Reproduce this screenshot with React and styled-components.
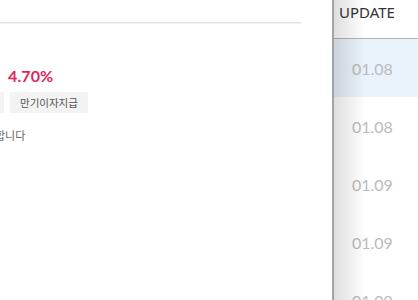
import React from "react";
import styled, { createGlobalStyle } from "styled-components";

const Global = createGlobalStyle`
  html, body { margin: 0; padding: 0; background: #fff; overflow: hidden; }
  body { font-family: "Noto Sans", "Noto Sans CJK KR", sans-serif; }
`;

const Page = styled.div`
  display: grid;
  grid-template-columns: 332px 90px;
  width: 418px;
  height: 300px;
  overflow: hidden;
`;

const LeftPanel = styled.div`
  overflow: hidden;
  padding-top: 22px;
`;

const Divider = styled.div`
  width: 301px;
  height: 1px;
  background: #e2e2e2;
  border-bottom: 1px solid #f0f0f0;
`;

const Card = styled.div`
  margin-left: -106px;
  padding-top: 42px;
  display: flex;
  flex-direction: column;
`;

const RateRow = styled.div`
  display: flex;
  align-items: center;
  gap: 12px;
  height: 18px;
`;

const RateLabel = styled.span`
  width: 102px;
  font-family: "Lato", "Noto Sans CJK KR", sans-serif;
  font-size: 13px;
  color: #666;
  text-align: right;
`;

const Rate = styled.span`
  font-family: "Lato", sans-serif;
  font-weight: 700;
  font-size: 16px;
  color: #e0245e;
  letter-spacing: 0.1px;
`;

const TagRow = styled.div`
  display: flex;
  gap: 6px;
  margin: 8px 0 0 6px;
`;

const Tag = styled.span`
  height: 21px;
  padding: 0 10px;
  display: inline-flex;
  align-items: center;
  background: #f3f3f3;
  color: #555;
  font-family: "Noto Sans CJK KR", sans-serif;
  font-size: 10.5px;
  white-space: nowrap;
`;

const Note = styled.p`
  margin: 14px 0 0 15px;
  font-family: "Noto Sans CJK KR", sans-serif;
  font-size: 11px;
  color: #666;
  white-space: nowrap;
`;

const Column = styled.div`
  position: relative;
  border-left: 2px solid #a3a3a3;
  background: #fff;
  &::before {
    content: "";
    position: absolute;
    top: 0;
    bottom: 0;
    left: 0;
    width: 32px;
    background: linear-gradient(to right, rgba(0, 0, 0, 0.13), rgba(0, 0, 0, 0));
    pointer-events: none;
    z-index: 1;
  }
`;

const HeadCell = styled.div`
  height: 39px;
  border-bottom: 1px solid #b5b5b5;
  padding-left: 5px;
  display: flex;
  align-items: flex-start;
  padding-top: 1px;
  box-sizing: border-box;
  font-family: "Noto Sans", sans-serif;
  font-size: 15px;
  color: #333;
  line-height: 22px;
`;

const Row = styled.div`
  height: 58px;
  display: flex;
  align-items: center;
  padding-left: 18px;
  background: ${(p) => (p.$active ? "#eaf2fb" : "#fff")};
  font-family: "Lato", sans-serif;
  font-size: 16px;
  color: #bbb;
`;

const dates = ["01.08", "01.08", "01.09", "01.09", "01.09"];

export default function App() {
  return (
    <>
      <Global />
      <Page>
        <LeftPanel>
          <Divider />
          <Card>
            <RateRow>
              <RateLabel>기본 3.20%</RateLabel>
              <Rate>4.70%</Rate>
            </RateRow>
            <TagRow>
              <Tag>정기예금</Tag>
              <Tag>단리</Tag>
              <Tag>만기이자지급</Tag>
            </TagRow>
            <Note>이자를 만기에 지급합니다</Note>
          </Card>
        </LeftPanel>
        <Column>
          <HeadCell>UPDATE</HeadCell>
          {dates.map((d, i) => (
            <Row key={i} $active={i === 0}>
              {d}
            </Row>
          ))}
        </Column>
      </Page>
    </>
  );
}
